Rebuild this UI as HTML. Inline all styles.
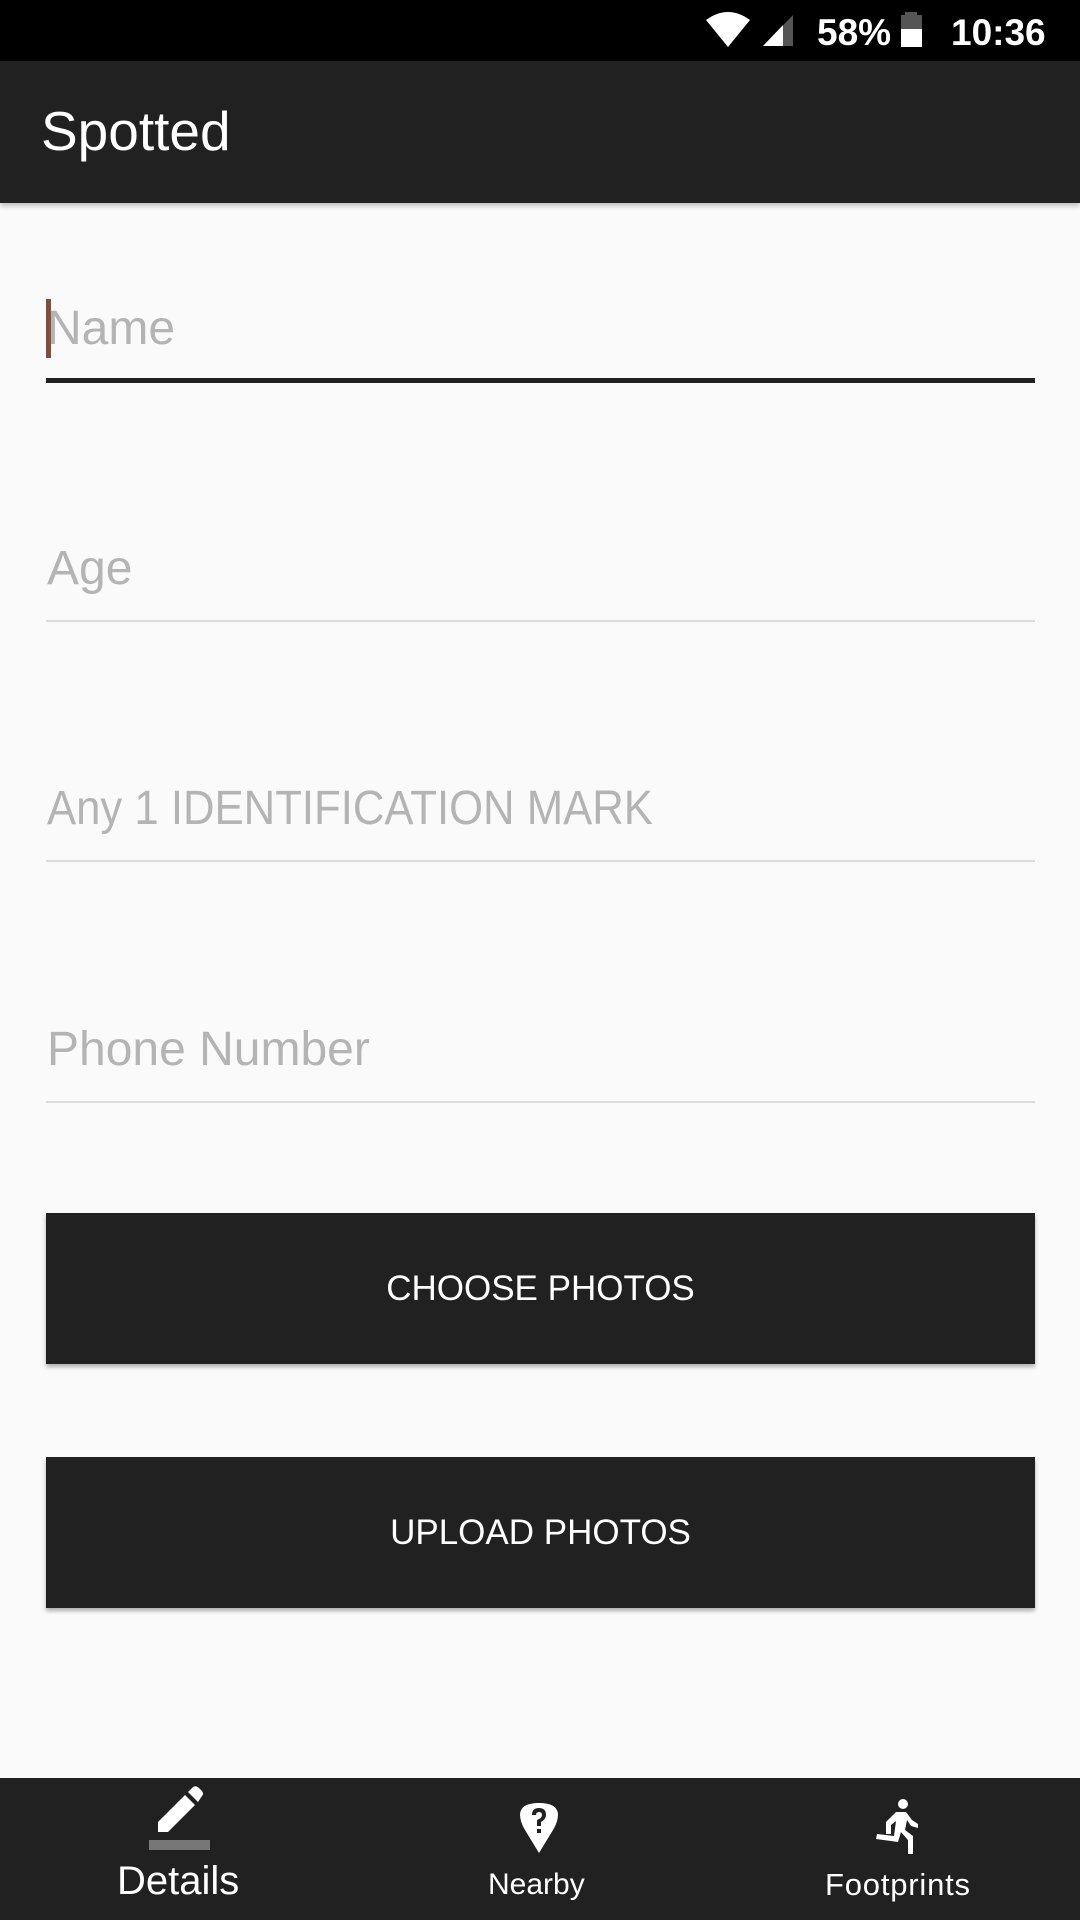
<!DOCTYPE html>
<html><head><meta charset="utf-8"><style>
*{margin:0;padding:0;box-sizing:border-box}
body{width:1080px;height:1920px;background:#fafafa;position:relative;overflow:hidden;font-family:"Liberation Sans",sans-serif}
.a{position:absolute;white-space:nowrap;line-height:1}
.ph{font-size:48px;color:#b4b4b4;left:47px}
.ln{position:absolute;left:46px;width:989px;height:2px;background:#dcdcdc}
.btn{position:absolute;left:46px;width:989px;height:151px;background:#212121;box-shadow:0 3px 4px rgba(0,0,0,.3);color:#fff;font-size:35px;text-align:center;line-height:151px}
</style></head><body>
<div style="position:absolute;left:0;top:0;width:1080px;height:61px;background:#000"></div>
<svg style="position:absolute;left:0;top:0" width="1080" height="61">
<path d="M706 20 Q728 4 750 20 L728 47 Z" fill="#fff"/>
<path d="M763 46 L793 15 L793 46 Z" fill="#555"/>
<path d="M763 46 L783 25 L783 46 Z" fill="#fff"/>
<rect x="905" y="12" width="12" height="4" fill="#555"/>
<rect x="901" y="15" width="21" height="14" fill="#555"/>
<rect x="901" y="29" width="21" height="18" fill="#fff"/>
</svg>
<div class="a" style="left:817px;top:14px;font-size:37px;color:#fff;font-weight:bold">58%</div>
<div class="a" style="left:951px;top:14px;font-size:37px;color:#fff;font-weight:bold">10:36</div>
<div style="position:absolute;left:0;top:61px;width:1080px;height:142px;background:#212121;box-shadow:0 3px 5px rgba(0,0,0,.25)"></div>
<div class="a" style="left:41px;top:104px;font-size:55px;color:#fff">Spotted</div>

<div style="position:absolute;left:46px;top:299px;width:5px;height:59px;background:#7b5042"></div>
<div class="a ph" style="top:305px">Name</div>
<div class="ln" style="top:378px;height:5px;background:#212121"></div>
<div class="a ph" style="top:545px">Age</div>
<div class="ln" style="top:620px"></div>
<div class="a ph" style="top:785px;transform:scaleX(0.91);transform-origin:0 0">Any 1 IDENTIFICATION MARK</div>
<div class="ln" style="top:860px"></div>
<div class="a ph" style="top:1026px">Phone Number</div>
<div class="ln" style="top:1101px"></div>

<div class="btn" style="top:1213px">CHOOSE PHOTOS</div>
<div class="btn" style="top:1457px">UPLOAD PHOTOS</div>

<div style="position:absolute;left:0;top:1778px;width:1080px;height:142px;background:#212121"></div>
<svg style="position:absolute;left:0;top:1778px" width="1080" height="142">
<path d="M158 54 L158 44 L185 17 L195 27 L168 54 Z" fill="#fff"/>
<path d="M188 14 L193 9 Q196 7 199 10 L202 13 Q204 16 202 18 L198 24 Z" fill="#fff"/>
<rect x="149" y="62" width="61" height="10" fill="#777"/>
<path d="M539 75 L525 52 Q520 44 520 36 Q521 25 539 25 Q557 25 558 36 Q558 44 553 52 Z" fill="#fff"/>
<path d="M532 37 Q532 30 539 30 Q546 30 546 37 Q546 41 541 44 L541 48 L537 48 L537 42 Q542 40 542 37 Q542 34 539 34 Q536 34 536 37 Z" fill="#212121"/>
<rect x="537" y="51" width="4" height="4" fill="#212121"/>
<circle cx="903" cy="26" r="5" fill="#fff"/>
<path d="M896 34 L886 44 L886 56 L891 56 L891 47 L896 43 L894 58 L877 56 L876 61 L898 64 L901 54 L908 62 L908 76 L913 76 L913 58 L905 52 L907 42 L911 48 L918 50 L918 46 L912 42 L906 34 Z" fill="#fff"/>
</svg>
<div class="a" style="left:117px;top:1861px;font-size:40px;color:#fff">Details</div>
<div class="a" style="left:488px;top:1870px;font-size:30px;color:#fff">Nearby</div>
<div class="a" style="left:825px;top:1869px;font-size:31px;color:#fff;letter-spacing:0.8px">Footprints</div>
</body></html>
